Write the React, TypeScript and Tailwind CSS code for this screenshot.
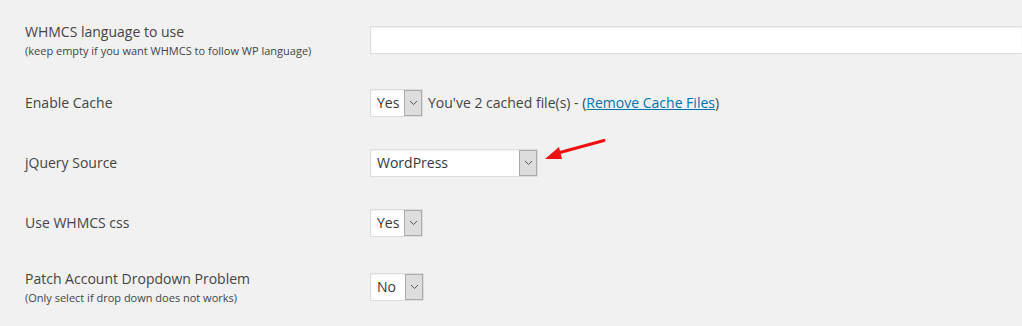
import React from "react";

function Chevron() {
  return (
    <svg width="9" height="6" viewBox="0 0 9 6" className="block">
      <path d="M1 1 L4.5 4.5 L8 1" fill="none" stroke="#555" strokeWidth="1" />
    </svg>
  );
}

function Select({ value, width }: { value: string; width: string }) {
  return (
    <div
      className={`flex h-[28px] items-stretch border border-[#dddddd] bg-white shadow-[inset_0_1px_2px_rgba(0,0,0,0.07)] ${width}`}
    >
      <div className="flex flex-1 items-center pb-[1px] pl-[6px] text-[14px] text-[#32373c]">{value}</div>
      <div className="flex w-[18px] items-center justify-center border border-[#aaaaaa] bg-[#dddddd]">
        <Chevron />
      </div>
    </div>
  );
}

function Label({ title, desc }: { title: string; desc?: string }) {
  return (
    <div className="w-[370px] shrink-0 pl-[25px]">
      <div className="text-[14px] leading-[20px] text-[#444444]">{title}</div>
      {desc && <div className="mt-[1px] text-[11px] leading-[16px] text-[#444444]">{desc}</div>}
    </div>
  );
}

export default function App() {
  return (
    <div
      className="relative h-[326px] w-[1022px] overflow-hidden bg-[#f1f1f1]"
      style={{ fontFamily: '"Open Sans", "Noto Sans", sans-serif' }}
    >
      <div className="flex flex-col pt-[26px]">
        <div className="flex h-[28px] items-center">
          <Label title="WHMCS language to use" desc="(keep empty if you want WHMCS to follow WP language)" />
          <div className="h-[28px] flex-1 border border-r-0 border-[#dddddd] bg-white shadow-[inset_0_1px_2px_rgba(0,0,0,0.07)]" />
        </div>
        <div className="mt-[35px] flex h-[28px] items-center">
          <Label title="Enable Cache" />
          <Select value="Yes" width="w-[53px]" />
          <div className="ml-[5px] pb-[1px] text-[14px] text-[#444444]">
            You've 2 cached file(s) - (
            <a className="text-[#0073aa] underline">Remove Cache Files</a>)
          </div>
        </div>
        <div className="mt-[32px] flex h-[28px] items-center">
          <Label title="jQuery Source" />
          <Select value="WordPress" width="w-[168px]" />
        </div>
        <div className="mt-[32px] flex h-[28px] items-center">
          <Label title="Use WHMCS css" />
          <Select value="Yes" width="w-[53px]" />
        </div>
        <div className="mt-[36px] flex h-[28px] items-center">
          <Label title="Patch Account Dropdown Problem" desc="(Only select if drop down does not works)" />
          <Select value="No" width="w-[54px]" />
        </div>
      </div>
      <svg
        className="absolute left-[540px] top-[134px]"
        width="72"
        height="32"
        viewBox="0 0 72 32"
      >
        <line x1="64" y1="6.5" x2="18" y2="19" stroke="#f01010" strokeWidth="3" strokeLinecap="round" />
        <polygon points="5,25 19,13 22,25" fill="#f01010" />
      </svg>
    </div>
  );
}
